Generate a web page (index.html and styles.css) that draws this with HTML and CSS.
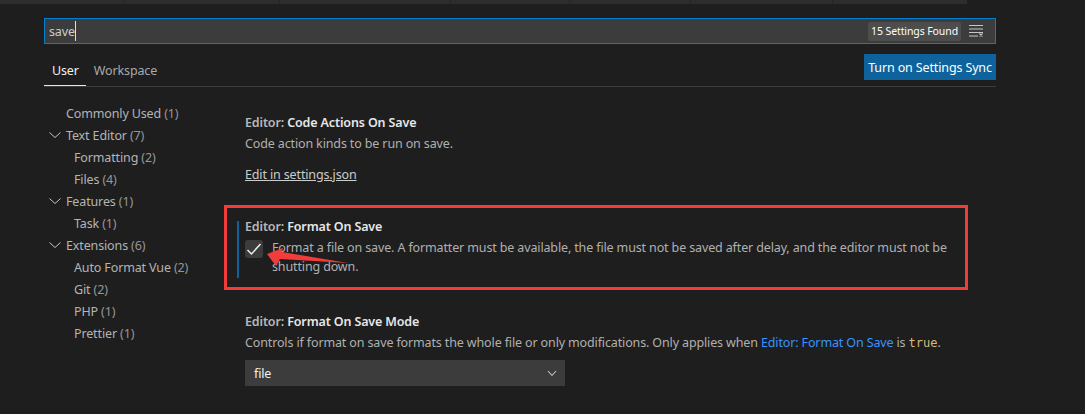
FILE: index.html
```html
<!DOCTYPE html>
<html lang="en">

<head>
  <meta charset="UTF-8">
  <title>Settings</title>
  <link rel="stylesheet" href="styles.css">
</head>

<body>
  <div class="tabstrip">
    <span class="tab w1"></span>
    <span class="tab w2"></span>
    <span class="tab w3"></span>
    <span class="tab w4"></span>
    <span class="tab w5"></span>
    <span class="tab w6"></span>
    <span class="tab w7"></span>
  </div>

  <main class="settings">
    <div class="search">
      <span class="search_text">save</span><span class="caret"></span>
      <span class="count">15 Settings Found</span>
      <svg class="clear" width="14" height="12" viewBox="0 0 14 12" fill="none" stroke="#c5c5c5">
        <path d="M0 .5h14M0 4h14M0 7.500h14M0 11h9" />
        <path d="M10.500 8.500l3 3M13.500 8.500l-3 3" stroke-width="1.100" />
      </svg>
    </div>

    <div class="tabs_row">
      <div class="tabs">
        <span class="scope active">User</span>
        <span class="scope">Workspace</span>
      </div>
      <button class="sync">Turn on Settings Sync</button>
    </div>

    <div class="columns">
      <nav class="toc">
        <div class="row top">Commonly Used <i>(1)</i></div>
        <div class="row top"><svg class="twist" width="12" height="12" viewBox="0 0 12 12"><path d="M.5 3.500l5.500 5 5.500-5" /></svg>Text Editor <i>(7)</i></div>
        <div class="row sub">Formatting <i>(2)</i></div>
        <div class="row sub">Files <i>(4)</i></div>
        <div class="row top"><svg class="twist" width="12" height="12" viewBox="0 0 12 12"><path d="M.5 3.500l5.500 5 5.500-5" /></svg>Features <i>(1)</i></div>
        <div class="row sub">Task <i>(1)</i></div>
        <div class="row top"><svg class="twist" width="12" height="12" viewBox="0 0 12 12"><path d="M.5 3.500l5.500 5 5.500-5" /></svg>Extensions <i>(6)</i></div>
        <div class="row sub">Auto Format Vue <i>(2)</i></div>
        <div class="row sub">Git <i>(2)</i></div>
        <div class="row sub">PHP <i>(1)</i></div>
        <div class="row sub">Prettier <i>(1)</i></div>
      </nav>

      <section class="list">
        <div class="item first">
          <h3><span>Editor:</span> Code Actions On Save</h3>
          <p>Code action kinds to be run on save.</p>
          <a class="edit" href="#">Edit in settings.json</a>
        </div>

        <div class="item focused">
          <h3><span>Editor:</span> Format On Save</h3>
          <div class="check_row">
            <span class="checkbox">
              <svg width="16" height="16" viewBox="0 0 16 16" fill="none" stroke="#f0f0f0" stroke-width="1.500"><path d="M1.500 9l4 4 9-10" /></svg>
            </span>
            <p>Format a file on save. A formatter must be available, the file must not be saved after delay, and the editor must not be shutting down.</p>
          </div>
        </div>

        <div class="item">
          <h3><span>Editor:</span> Format On Save Mode</h3>
          <p>Controls if format on save formats the whole file or only modifications. Only applies when <a class="ref" href="#">Editor: Format On Save</a> is <code>true</code>.</p>
          <div class="select">
            file
            <svg width="12" height="12" viewBox="0 0 12 12" fill="none" stroke="#c5c5c5" stroke-width="1.100"><path d="M2 4l4 4.500L10 4" /></svg>
          </div>
        </div>
      </section>
    </div>
  </main>

  <div class="mark_box"></div>
  <svg class="mark_arrow" width="100" height="30" viewBox="0 0 100 30"><path d="M7 14L23 8l-1 4 66 11-68-4-4 7z" fill="#f23c3c" /></svg>
</body>

</html>
```

FILE: styles.css
```css
* {
  box-sizing: border-box;
}

body {
  margin: 0;
  height: 414px;
  overflow: hidden;
  background-color: #1e1e1e;
  color: #cccccc;
  font-family: "Noto Sans", sans-serif;
  font-size: 12.500px;
  letter-spacing: -0.135px;
}

.tabstrip {
  display: flex;
  height: 4px;
}

.tab {
  background-color: #2d2d2d;
  border-right: 1px solid #252526;
}

.w1 {
  width: 124px;
}

.w2 {
  width: 156px;
}

.w3 {
  width: 171px;
}

.w4 {
  width: 119px;
}

.w5 {
  width: 121px;
}

.w6 {
  width: 142px;
}

.w7 {
  width: 134px;
  border-right: none;
}

.settings {
  width: 952px;
  margin-left: 44px;
  padding-top: 14px;
}

.search {
  display: flex;
  align-items: center;
  height: 26px;
  padding: 0 12px 0 4px;
  background-color: #3c3c3c;
  border: 1px solid #007fd4;
}

.caret {
  width: 1px;
  height: 20px;
  background-color: #e0e0e0;
}

.count {
  margin-left: auto;
  padding: 0 3px;
  height: 19px;
  line-height: 19px;
  border-radius: 2px;
  background-color: #4d4d4d;
  color: #ffffff;
  font-size: 10.500px;
  letter-spacing: -0.100px;
}

.clear {
  margin-left: 8px;
}

.tabs_row {
  display: flex;
  justify-content: space-between;
  height: 43px;
  padding-top: 10px;
  border-bottom: 1px solid #3c3c3c;
}

.tabs {
  display: flex;
  align-self: flex-end;
}

.scope {
  height: 32px;
  line-height: 33px;
  padding: 0 8px;
  color: #a9a9a9;
}

.scope.active {
  padding-right: 7px;
  color: #f0f0f0;
  border-bottom: 1px solid #e7e7e7;
  margin-bottom: -1px;
}

.sync {
  width: 132px;
  height: 26px;
  padding: 0;
  border: none;
  background-color: #0e639c;
  color: #ffffff;
  font: inherit;
  letter-spacing: inherit;
}

.columns {
  display: flex;
}

.toc {
  width: 180px;
  padding-top: 15px;
}

.row {
  display: flex;
  align-items: center;
  height: 22px;
  white-space: pre;
  color: #b4b4b4;
}

.row i {
  font-style: normal;
  opacity: 0.8;
}

.top {
  padding-left: 22px;
}

.sub {
  padding-left: 30px;
}

.twist {
  margin-left: -17px;
  margin-right: 5px;
  fill: none;
  stroke: #c5c5c5;
}

.list {
  flex: 1;
  padding-top: 27px;
  padding-left: 21px;
}

.item h3 {
  margin: 0;
  height: 18px;
  line-height: 18px;
  font-size: 12.500px;
  font-weight: 600;
  color: #e7e7e7;
}

.item h3 span {
  color: #b8b8b8;
}

.item p {
  margin: 0;
  line-height: 21px;
  color: #b0b0b0;
}

.item > p {
  margin-top: 1px;
}

.first {
  padding-bottom: 36px;
}

.edit {
  display: block;
  margin-top: 11px;
  line-height: 20px;
  color: #cccccc;
}

.focused {
  margin-left: -8px;
  margin-bottom: 35px;
  padding-left: 6px;
  padding-bottom: 2px;
  border-left: 2px solid #0e639c;
}

.focused h3 {
  height: 12px;
  line-height: 12px;
}

.check_row {
  display: flex;
  gap: 9px;
  margin-top: 7px;
}

.checkbox {
  flex: none;
  display: flex;
  align-items: center;
  justify-content: center;
  width: 18px;
  height: 18px;
  border-radius: 3px;
  background-color: #3c3c3c;
}

.check_row p {
  width: 690px;
  margin-top: -2px;
  line-height: 19px;
}

.ref {
  color: #3794ff;
  text-decoration: none;
}

code {
  font-family: "DejaVu Sans Mono", monospace;
  font-size: 12px;
  letter-spacing: 0;
  color: #d7ba7d;
}

.select {
  display: flex;
  align-items: center;
  justify-content: space-between;
  width: 320px;
  height: 26px;
  margin-top: 6px;
  padding: 0 7px 0 9px;
  background-color: #3c3c3c;
  color: #f0f0f0;
}

.mark_box {
  position: absolute;
  left: 224px;
  top: 205px;
  width: 744px;
  height: 85px;
  border: 3px solid #f23c3c;
}

.mark_arrow {
  position: absolute;
  left: 260px;
  top: 240px;
}
```
